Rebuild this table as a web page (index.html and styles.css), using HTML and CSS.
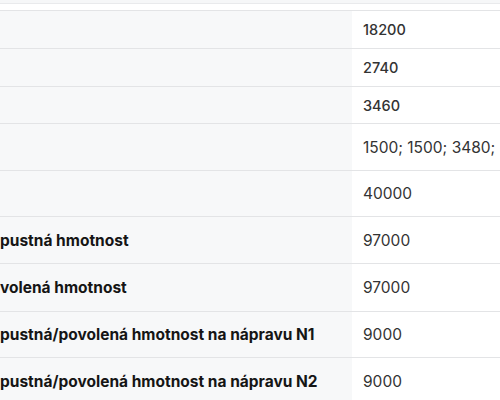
FILE: index.html
```html
<!DOCTYPE html>
<html lang="cs">
<head>
<meta charset="utf-8">
<link rel="stylesheet" href="styles.css">
</head>
<body>
<div class="top-band"></div>
<div class="table">
  <div class="row r-h1"><div class="label"></div><div class="value small">18200</div></div>
  <div class="row r-h2"><div class="label"></div><div class="value small">2740</div></div>
  <div class="row r-h3"><div class="label"></div><div class="value small">3460</div></div>
  <div class="row r-h4"><div class="label"></div><div class="value">1500; 1500; 3480;</div></div>
  <div class="row r-h5"><div class="label"></div><div class="value">40000</div></div>
  <div class="row r-h6"><div class="label">pustná hmotnost</div><div class="value">97000</div></div>
  <div class="row r-h7"><div class="label">volená hmotnost</div><div class="value">97000</div></div>
  <div class="row r-h8"><div class="label">pustná/povolená hmotnost na nápravu N1</div><div class="value">9000</div></div>
  <div class="row r-h9"><div class="label">pustná/povolená hmotnost na nápravu N2</div><div class="value">9000</div></div>
</div>
</body>
</html>
```
FILE: styles.css
```css
html, body {
  margin: 0;
  padding: 0;
  background: #ffffff;
  font-family: Inter, "Liberation Sans", sans-serif;
  overflow: hidden;
}
.top-band {
  height: 3px;
  border-bottom: 1px solid #e9eaec;
  background: #f6f7f8;
}
.table {
  display: flex;
  flex-direction: column;
  border-top: 1px solid #e3e4e6;
  margin-top: 6px;
}
.row {
  display: grid;
  grid-template-columns: 352px 1fr;
  border-bottom: 1px solid #e3e4e6;
}
.r-h1, .r-h2 { height: 37px; }
.r-h3 { height: 36px; }
.r-h4 { height: 46px; }
.r-h5 { height: 45px; }
.r-h6 { height: 46px; }
.r-h7 { height: 47px; }
.r-h8 { height: 45px; }
.r-h9 { height: 46px; }
.label {
  background: #f7f8f9;
  display: flex;
  align-items: center;
  font-weight: 700;
  font-size: 15.5px;
  color: #151515;
  white-space: nowrap;
  overflow: hidden;
  padding-left: 0;
}
.value {
  display: flex;
  align-items: center;
  padding-left: 11px;
  font-size: 15.5px;
  color: #333333;
  white-space: nowrap;
  overflow: hidden;
}
.value.small {
  font-size: 14.5px;
  font-weight: 500;
}
```
